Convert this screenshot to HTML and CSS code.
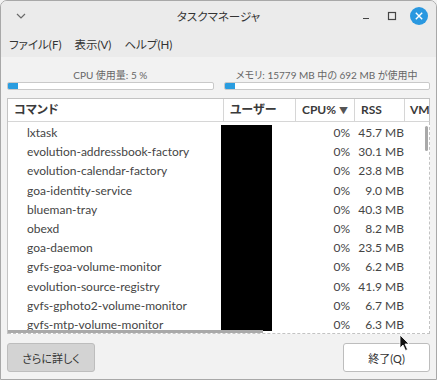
FILE: index.html
```html
<!DOCTYPE html>
<html lang="ja">
  <head>
    <meta charset="UTF-8" />
    <title>タスクマネージャ</title>
    <link rel="stylesheet" href="styles.css">
  </head>
  <body>
    <div class="window">
      <div class="titlebar">
        <span class="tb-menu">
          <svg width="10" height="6" viewBox="0 0 10 6"><path d="M1 1 L5 5 L9 1" fill="none" stroke="#6a6a6a" stroke-width="1.2"/></svg>
        </span>
        <span class="title">タスクマネージャ</span>
        <span class="tb-buttons">
          <svg class="tb-min" width="10" height="10" viewBox="0 0 10 10"><path d="M2 7.5 H8" stroke="#444" stroke-width="1.2"/></svg>
          <svg class="tb-max" width="10" height="10" viewBox="0 0 10 10"><rect x="1.5" y="1.5" width="7" height="7" fill="none" stroke="#444" stroke-width="1.2"/></svg>
          <svg class="tb-close" width="18" height="18" viewBox="0 0 18 18"><circle cx="9" cy="9" r="9" fill="#2a98e0"/><path d="M5.8 5.8 L12.2 12.2 M12.2 5.8 L5.8 12.2" stroke="#fff" stroke-width="1.4"/></svg>
        </span>
      </div>

      <div class="menubar">
        <span>ファイル(F)</span>
        <span>表示(V)</span>
        <span>ヘルプ(H)</span>
      </div>

      <div class="content">
        <div class="stats">
          <div class="stat">
            <div class="stat-label">CPU 使用量: 5 %</div>
            <div class="bar"><div class="bar-fill" style="width: 5%"></div></div>
          </div>
          <div class="stat">
            <div class="stat-label">メモリ: 15779 MB 中の 692 MB が使用中</div>
            <div class="bar"><div class="bar-fill" style="width: 5%"></div></div>
          </div>
        </div>

        <div class="table">
          <div class="thead">
            <div class="th c-cmd">コマンド</div>
            <div class="th c-user">ユーザー</div>
            <div class="th c-cpu">CPU% <span class="sort">▼</span></div>
            <div class="th c-rss">RSS</div>
            <div class="th c-vm">VM</div>
          </div>
          <div class="tbody">
            <div class="row"><span class="c-cmd">lxtask</span><span class="c-user"></span><span class="c-cpu">0%</span><span class="c-rss">45.7 MB</span></div>
            <div class="row"><span class="c-cmd">evolution-addressbook-factory</span><span class="c-user"></span><span class="c-cpu">0%</span><span class="c-rss">30.1 MB</span></div>
            <div class="row"><span class="c-cmd">evolution-calendar-factory</span><span class="c-user"></span><span class="c-cpu">0%</span><span class="c-rss">23.8 MB</span></div>
            <div class="row"><span class="c-cmd">goa-identity-service</span><span class="c-user"></span><span class="c-cpu">0%</span><span class="c-rss">9.0 MB</span></div>
            <div class="row"><span class="c-cmd">blueman-tray</span><span class="c-user"></span><span class="c-cpu">0%</span><span class="c-rss">40.3 MB</span></div>
            <div class="row"><span class="c-cmd">obexd</span><span class="c-user"></span><span class="c-cpu">0%</span><span class="c-rss">8.2 MB</span></div>
            <div class="row"><span class="c-cmd">goa-daemon</span><span class="c-user"></span><span class="c-cpu">0%</span><span class="c-rss">23.5 MB</span></div>
            <div class="row"><span class="c-cmd">gvfs-goa-volume-monitor</span><span class="c-user"></span><span class="c-cpu">0%</span><span class="c-rss">6.2 MB</span></div>
            <div class="row"><span class="c-cmd">evolution-source-registry</span><span class="c-user"></span><span class="c-cpu">0%</span><span class="c-rss">41.9 MB</span></div>
            <div class="row"><span class="c-cmd">gvfs-gphoto2-volume-monitor</span><span class="c-user"></span><span class="c-cpu">0%</span><span class="c-rss">6.7 MB</span></div>
            <div class="row"><span class="c-cmd">gvfs-mtp-volume-monitor</span><span class="c-user"></span><span class="c-cpu">0%</span><span class="c-rss">6.3 MB</span></div>
            <div class="redact"></div>
            <div class="vscroll"></div>
            <div class="hscroll"></div>
          </div>
        </div>

        <div class="buttons">
          <button class="btn btn-more">さらに詳しく</button>
          <button class="btn btn-quit">終了(Q)</button>
        </div>
      </div>

      <svg class="cursor" width="12" height="18" viewBox="0 0 12 18"><path d="M1 1 L1 14 L4 11 L6.5 16.5 L8.5 15.5 L6 10 L10 10 Z" fill="#111" stroke="#fff" stroke-width="0.8"/></svg>
    </div>
  </body>
</html>
```

FILE: styles.css
```css
html,
body {
  margin: 0;
  padding: 0;
  background: #f2f2f2;
}
body {
  font-family: "Lato", "Noto Sans CJK JP", sans-serif;
  font-feature-settings: "palt";
  font-size: 12px;
  color: #454545;
}
.window {
  position: relative;
  box-sizing: border-box;
  width: 437px;
  height: 380px;
  border: 1px solid #a8a8a8;
  border-radius: 7px 7px 0 0;
  background: #f2f2f2;
  display: flex;
  flex-direction: column;
  overflow: hidden;
}

/* title bar */
.titlebar {
  height: 29px;
  background: #ebebeb;
  display: flex;
  align-items: center;
  position: relative;
}
.tb-menu {
  width: 40px;
  display: flex;
  justify-content: center;
}
.title {
  position: absolute;
  left: 0;
  right: 0;
  text-align: center;
  font-size: 11.5px;
  color: #333;
  pointer-events: none;
}
.tb-buttons {
  margin-left: auto;
  display: flex;
  align-items: center;
  gap: 16px;
  padding-right: 8px;
}
.tb-close {
  margin-left: -3px;
}

/* menu */
.menubar {
  height: 27px;
  background: #ebebeb;
  display: flex;
  align-items: center;
  gap: 13px;
  padding-left: 8px;
  font-size: 11.5px;
  color: #333;
}

/* content */
.content {
  flex: 1;
  display: flex;
  flex-direction: column;
  padding: 0 6px 7px 6px;
}
.stats {
  display: flex;
  gap: 10px;
  padding-top: 11px;
}
.stat {
  flex: 1;
}
.stat-label {
  text-align: center;
  font-size: 10px;
  line-height: 14px;
  color: #666;
}
.bar {
  box-sizing: border-box;
  height: 8px;
  background: #fff;
  border: 1px solid #c9c9c9;
  border-radius: 2px;
  overflow: hidden;
}
.bar-fill {
  height: 100%;
  background: #2a9de0;
}

/* process table */
.table {
  margin-top: 8px;
  height: 235px;
  background: #fff;
  border-top: 1px solid #c3c3c3;
  border-left: 1px solid #c3c3c3;
  display: flex;
  flex-direction: column;
}
.thead {
  display: flex;
  height: 22px;
  border-bottom: 1px solid #d6d6d6;
  border-right: 1px solid #c3c3c3;
  font-weight: bold;
  color: #3a3a3a;
  overflow: hidden;
}
.th {
  box-sizing: border-box;
  line-height: 22px;
  padding-left: 6px;
  border-right: 1px solid #d6d6d6;
  white-space: nowrap;
  flex-shrink: 0;
}
.th.c-vm {
  border-right: none;
  flex: 1;
  padding-left: 5px;
}
.sort {
  font-size: 9px;
  color: #555;
}
.c-cmd {
  width: 216px;
}
.c-user {
  width: 72px;
}
.c-cpu {
  width: 59px;
}
.c-rss {
  width: 50px;
}
.tbody {
  position: relative;
  flex: 1;
  overflow: hidden;
  padding-top: 1px;
  border-right: 1px dashed #c3c3c3;
  border-bottom: 1px dashed #c3c3c3;
}
.row {
  display: flex;
  height: 19.2px;
  line-height: 19.2px;
  white-space: nowrap;
}
.row span {
  box-sizing: border-box;
  flex-shrink: 0;
}
.row .c-cmd {
  padding-left: 19px;
}
.row .c-cpu {
  text-align: right;
  padding-right: 5px;
}
.row .c-rss {
  text-align: right;
  padding-right: 1px;
}
.redact {
  position: absolute;
  left: 213px;
  top: 3px;
  width: 51px;
  height: 206px;
  background: #000;
}
.vscroll {
  position: absolute;
  right: 1px;
  top: 4px;
  width: 3px;
  height: 25px;
  border-radius: 2px;
  background: #a9a9a9;
}
.hscroll {
  position: absolute;
  left: 0;
  bottom: 0;
  width: 255px;
  height: 3px;
  background: #a9a9a9;
}

/* bottom buttons */
.buttons {
  margin-top: auto;
  display: flex;
  justify-content: space-between;
}
.btn {
  box-sizing: border-box;
  height: 29px;
  font-family: "Lato", "Noto Sans CJK JP", sans-serif;
  font-feature-settings: "palt";
  font-size: 11px;
  color: #333;
  border: 1px solid #bdbdbd;
  border-radius: 3px;
  padding: 0;
}
.btn-more {
  width: 88px;
  background: #d3d3d3;
}
.btn-quit {
  width: 87px;
  background: #fff;
}

.cursor {
  position: absolute;
  left: 398px;
  top: 333px;
}
```
